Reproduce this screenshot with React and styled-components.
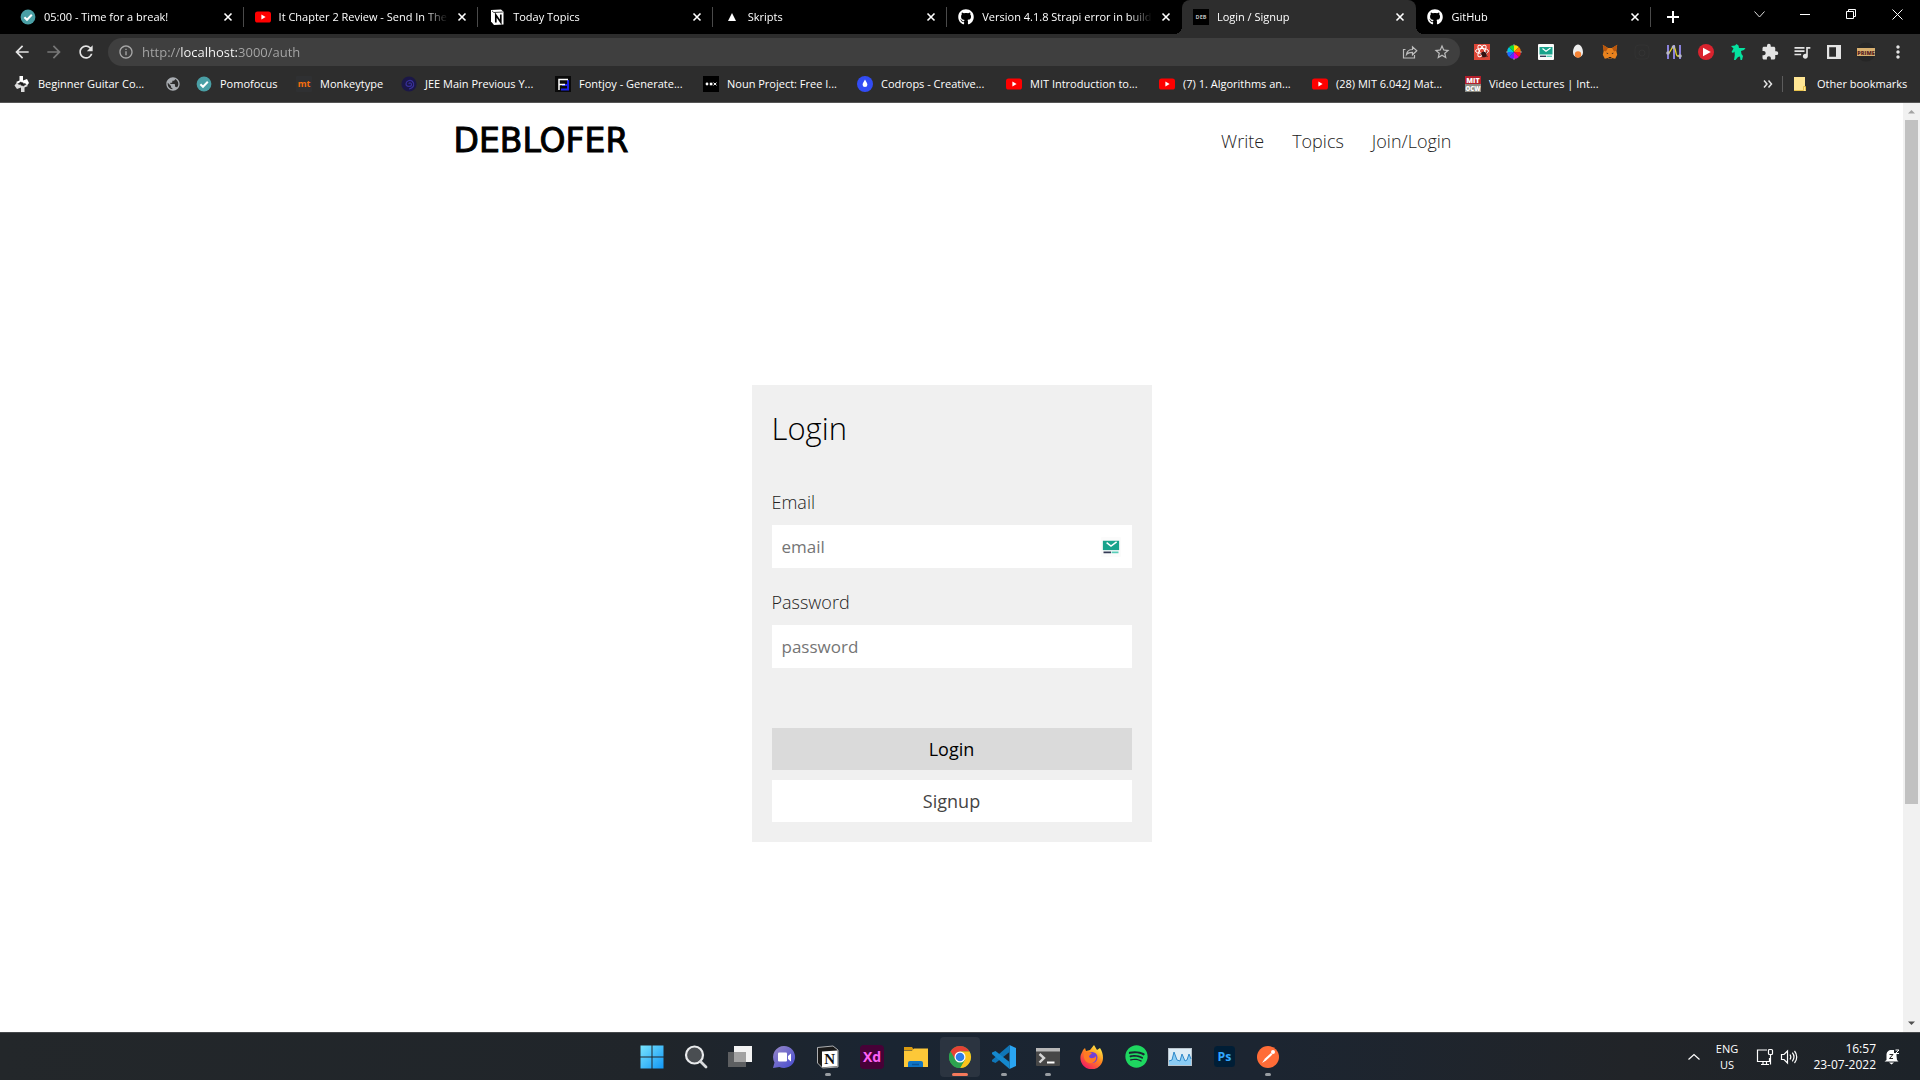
import React from "react";
import styled, { createGlobalStyle, css } from "styled-components";
import {
  MdArrowBack, MdArrowForward, MdRefresh, MdInfoOutline, MdStarOutline,
  MdExtension, MdQueueMusic, MdMoreVert, MdPublic,
} from "react-icons/md";
import { FaGithub, FaSpotify } from "react-icons/fa";

const uiFont = '"Open Sans", "Noto Sans", sans-serif';

const GlobalStyle = createGlobalStyle`
  *, *::before, *::after { box-sizing: border-box; }
  html, body, #root { height: 100%; }
  body { margin: 0; font-family: ${uiFont}; background: #fff; overflow: hidden; }
  button, input { font: inherit; border: 0; border-radius: 0; padding: 0; margin: 0; }
  button { background: none; color: inherit; cursor: pointer; }
  a { color: inherit; text-decoration: none; }
  svg { display: block; flex: none; }
`;

const Screen = styled.div`
  display: flex;
  flex-direction: column;
  height: 100vh;
`;

/* ---------- browser chrome ---------- */

const TabStrip = styled.div`
  display: flex;
  align-items: stretch;
  height: 34px;
  padding-left: 9px;
  background: #000;
  color: #fff;
`;

const Tabs = styled.div`
  display: flex;
  flex: 1;
  min-width: 0;
`;

const dividerLine = css`
  &::after {
    content: "";
    position: absolute;
    right: 0;
    top: 7px;
    width: 1px;
    height: 20px;
    background: #4a4a4a;
  }
`;

const activeFlares = css`
  background: #2d2d2d;

  &::before, &::after {
    content: "";
    position: absolute;
    bottom: 0;
    width: 8px;
    height: 8px;
  }
  &::before {
    right: 100%;
    background: radial-gradient(circle at 0 0, transparent 8px, #2d2d2d 8px);
  }
  &::after {
    left: 100%;
    background: radial-gradient(circle at 100% 0, transparent 8px, #2d2d2d 8px);
  }
`;

const Tab = styled.div`
  position: relative;
  display: flex;
  flex: 1 1 0;
  min-width: 0;
  align-items: center;
  gap: 8px;
  padding: 0 10px 0 11px;
  font-size: 11px;
  line-height: 16px;
  border-radius: 8px 8px 0 0;
  ${(p) => p.$divider && dividerLine}
  ${(p) => p.$active && activeFlares}
`;

const TabTitle = styled.span`
  flex: 1;
  min-width: 0;
  overflow: hidden;
  white-space: nowrap;
  mask-image: linear-gradient(to right, #000 calc(100% - 24px), transparent);
`;

const TabClose = styled.button`
  display: grid;
  place-items: center;
  width: 12px;
  height: 12px;
`;

const NewTab = styled.button`
  display: grid;
  place-items: center;
  width: 44px;
`;

const WindowControls = styled.div`
  display: flex;
  margin-left: 41px;
  height: 28px;
`;

const WindowButton = styled.button`
  display: grid;
  place-items: center;
  width: 46px;
`;

const Toolbar = styled.div`
  display: flex;
  align-items: center;
  height: 36px;
  padding: 0 6px;
  background: #2d2d2d;
`;

const ToolButton = styled.button`
  display: grid;
  place-items: center;
  width: 32px;
  height: 28px;
  color: ${(p) => (p.$dim ? "#777" : "#e4e4e4")};
`;

const AddressBar = styled.div`
  display: flex;
  flex: 1;
  align-items: center;
  height: 28px;
  margin: 0 6px;
  padding: 0 2px;
  border-radius: 14px;
  background: #3f3f3f;
  color: #bdbdbd;
`;

const AddressInput = styled.input`
  flex: 1;
  min-width: 0;
  height: 28px;
  font-size: 13px;
  outline: none;
  color: transparent;
  background: linear-gradient(to right, #a8a8a8 39px, #fff 39px, #fff 95px, #a8a8a8 95px);
  background-clip: text;
`;

const Bookmarks = styled.nav`
  display: flex;
  align-items: center;
  height: 33px;
  padding: 0 10px 4px 14px;
  background: #2d2d2d;
  border-bottom: 1px solid #555;
  color: #fff;
  font-size: 11px;
  line-height: 16px;
`;

const Bookmark = styled.a`
  display: flex;
  align-items: center;
  gap: 8px;
  flex: none;
  width: ${(p) => p.$w}px;
  white-space: nowrap;
`;

const Overflow = styled.button`
  display: grid;
  place-items: center;
  margin-left: auto;
  width: 28px;
  height: 16px;
`;

const BookmarkDivider = styled.span`
  width: 1px;
  height: 16px;
  margin-right: 10px;
  background: #5c5c5c;
`;

/* ---------- web page ---------- */

const Viewport = styled.div`
  display: flex;
  flex: 1;
  min-height: 0;
  background: #fff;
`;

const Page = styled.div`
  display: flex;
  flex: 1;
  flex-direction: column;
  min-width: 0;
`;

const Header = styled.header`
  display: flex;
  align-items: center;
  justify-content: space-between;
  width: 100%;
  max-width: 1000px;
  height: 76px;
  margin: 0 auto;
  padding-left: 2px;
`;

const Logo = styled.a`
  font-family: "DejaVu Sans", sans-serif;
  font-size: 33px;
  line-height: 40px;
  color: #000;
  -webkit-text-stroke: 1px #000;
`;

const Nav = styled.nav`
  display: flex;
  gap: 28px;
  font-size: 18px;
  font-weight: 300;
  line-height: 24px;
  color: #222;
`;

const Main = styled.main`
  display: grid;
  place-items: center;
  flex: 1;
  padding-top: 16px;
`;

const Card = styled.form`
  display: flex;
  flex-direction: column;
  width: 400px;
  padding: 20px;
  background: #f0f0f0;
`;

const Title = styled.h1`
  margin: 0 0 37px;
  font-size: 31px;
  font-weight: 300;
  line-height: 46px;
  color: #000;
`;

const Field = styled.div`
  display: flex;
  flex-direction: column;
  gap: 8px;
  margin-bottom: 20px;
`;

const Label = styled.label`
  font-size: 18px;
  font-weight: 300;
  line-height: 29px;
  color: #222;
`;

const InputBox = styled.div`
  display: flex;
  align-items: center;
  height: 43px;
  padding: 0 11px 0 10px;
  background: #fff;
`;

const Input = styled.input`
  flex: 1;
  min-width: 0;
  height: 43px;
  background: transparent;
  font-size: 17px;
  outline: none;
  color: #222;
  &::placeholder { color: #757575; }
`;

const Actions = styled.div`
  display: grid;
  gap: 10px;
  margin-top: 40px;
`;

const ActionButton = styled.button`
  height: 42px;
  font-size: 18px;
  background: ${(p) => (p.$primary ? "#dadada" : "#fff")};
  color: ${(p) => (p.$primary ? "#000" : "#444")};
`;

const Scrollbar = styled.div`
  display: flex;
  flex-direction: column;
  align-items: center;
  width: 17px;
  background: #f1f1f1;
`;

const ScrollArrow = styled.button`
  display: grid;
  place-items: center;
  width: 17px;
  height: 17px;
`;

const ScrollTrack = styled.div`
  display: grid;
  grid-template-rows: 13fr 4fr;
  flex: 1;
  width: 13px;
`;

const ScrollThumb = styled.div`
  background: #c1c1c1;
`;

/* ---------- taskbar ---------- */

const Taskbar = styled.footer`
  display: grid;
  grid-template-columns: 1fr auto 1fr;
  height: 48px;
  border-top: 1px solid #45484b;
  background: linear-gradient(to right, #23272a 0%, #20252a 34%, #1a2532 46%, #1c2531 66%, #212428 85%, #1d2329 100%);
  color: #fff;
`;

const Apps = styled.div`
  grid-column: 2;
  display: flex;
  align-items: center;
  gap: 4px;
`;

const TaskButton = styled.button`
  position: relative;
  display: grid;
  place-items: center;
  width: 40px;
  height: 40px;
  border-radius: 4px;
  background: ${(p) => (p.$active ? "#2b3440" : "transparent")};

  &::after {
    content: "";
    position: absolute;
    bottom: 1px;
    left: 50%;
    transform: translateX(-50%);
    width: ${(p) => (p.$active ? 16 : 6)}px;
    height: 3px;
    border-radius: 2px;
    background: ${(p) => (p.$active ? "#f4795b" : p.$open ? "#989da2" : "transparent")};
  }
`;

const Tray = styled.div`
  display: flex;
  align-items: center;
  justify-content: flex-end;
  padding-right: 14px;
  font-size: 12px;
  line-height: 16px;
`;

const TrayToggle = styled.button`
  display: grid;
  place-items: center;
  width: 24px;
  height: 40px;
`;

const TrayText = styled.div`
  width: ${(p) => p.$w}px;
  font-size: ${(p) => (p.$small ? 11 : 12)}px;
  text-align: ${(p) => p.$align};
  white-space: nowrap;
`;

const TrayIcons = styled.div`
  display: flex;
  gap: 6px;
  margin: 0 6px 0 8px;
`;

/* ---------- small icons ---------- */

const Svg = ({ size = 16, box = 16, children, ...rest }) => (
  <svg width={size} height={size} viewBox={`0 0 ${box} ${box}`} fill="none" aria-hidden="true" {...rest}>
    {children}
  </svg>
);

const CheckBadge = () => (
  <Svg>
    <circle cx="8" cy="8" r="7.4" fill="#4a9fa5" />
    <path d="M4.4 8.2l2.6 2.6 4.8-5" stroke="#fff" strokeWidth="2" />
  </Svg>
);
const YouTube = () => (
  <Svg>
    <rect x="0" y="2.5" width="16" height="11" rx="2.6" fill="#f00" />
    <path d="M6.4 5.6v4.8L10.6 8z" fill="#fff" />
  </Svg>
);
const NotionMark = () => (
  <Svg>
    <path d="M2 1L12 .5l2.500 2.200v12.800l-9.500.5L2 12.500z" fill="#fff" />
    <path d="M3 1.800l1.800 1.700 9-.5" stroke="#111" strokeWidth=".8" />
    <path d="M6.800 13.500V6l5 7.200V5.600" stroke="#000" strokeWidth="1.700" />
  </Svg>
);
const Triangle = () => (
  <Svg><path d="M8 4l4 8H4z" fill="#fff" /></Svg>
);
const DebIcon = () => (
  <Svg>
    <rect width="16" height="16" fill="#000" />
    <text x="8" y="10" fontSize="5.5" fontWeight="700" textAnchor="middle" fill="#bbb">DEB</text>
  </Svg>
);
const Pinwheel = () => (
  <Svg>
    <path d="M5.500 0H9v4.500L13 3l2 4-2 2.500L11 7 8.500 8.500 7 5.500 4 7.500 2 6l3.500-1.500z" fill="#fff" />
    <path d="M10.500 16H7v-4.500L3 13 .5 9.500 3 6.500 5 9l2.500-1.500L9 10.500 12 8.500l2 1.500-3.500 1.500z" fill="#dcdcdc" />
    <circle cx="8" cy="8" r="1.800" fill="#1a1a1a" />
  </Svg>
);
const Tile = ({ bg, fg, text, size = 8, y = 11 }) => (
  <Svg>
    <rect width="16" height="16" rx="1" fill={bg} />
    <text x="8" y={y} fontSize={size} fontWeight="700" textAnchor="middle" fill={fg}>{text}</text>
  </Svg>
);
const Swirl = () => (
  <Svg>
    <circle cx="8" cy="8" r="7.6" fill="#1b1748" />
    <path d="M8 8c0-2 3-1 2.500 1S5 11 5 8s4-5 6.500-2.500S13 12 8 13" stroke="#38309a" strokeWidth="1.200" />
  </Svg>
);
const FontjoyIcon = () => (
  <Svg>
    <rect width="16" height="16" fill="#0a0a0a" />
    <path d="M6 13.500h8M7 9h7M13 4v9" stroke="#1a22e8" strokeWidth="2" />
    <path d="M4 14V3.500h9M4 8.500h6" stroke="#fff" strokeWidth="1.500" />
  </Svg>
);
const NounIcon = () => (
  <Svg>
    <rect width="16" height="16" fill="#000" />
    <circle cx="4" cy="8" r="1.400" fill="#fff" />
    <rect x="6.800" y="6.700" width="2.600" height="2.600" fill="#fff" />
    <path d="M10.500 6.700l3 2.600M13.500 6.700l-3 2.600" stroke="#fff" />
  </Svg>
);
const CodropsIcon = () => (
  <Svg>
    <circle cx="8" cy="8" r="8" fill="#324cf5" />
    <path d="M8 3.500c1 2 2.400 3.400 2.400 5.200a2.400 2.400 0 01-4.800 0C5.600 6.900 7 5.500 8 3.500z" fill="#fff" />
  </Svg>
);
const MitIcon = () => (
  <Svg>
    <rect width="16" height="8" fill="#b3202c" />
    <rect y="8" width="16" height="8" fill="#8c8b82" />
    <text x="8" y="7" fontSize="7" fontWeight="800" textAnchor="middle" fill="#fff">MIT</text>
    <text x="8" y="15" fontSize="6" fontWeight="800" textAnchor="middle" fill="#fff">OCW</text>
  </Svg>
);
const FolderNote = () => (
  <Svg>
    <path d="M1 1h11v10h1v4H1z" fill="#ffe694" />
    <path d="M1 14.500h9.500V10.500h2v4" stroke="#e8c24b" />
  </Svg>
);

const ReactBug = () => (
  <Svg>
    <rect width="16" height="16" fill="#dd4637" />
    <g stroke="#fff" strokeWidth="1">
      <ellipse cx="8" cy="7" rx="6.500" ry="2.500" />
      <ellipse cx="8" cy="7" rx="6.500" ry="2.500" transform="rotate(60 8 7)" />
      <ellipse cx="8" cy="7" rx="6.500" ry="2.500" transform="rotate(120 8 7)" />
    </g>
    <ellipse cx="10" cy="10.500" rx="2.400" ry="3" fill="#311" transform="rotate(-35 10 10.500)" />
    <path d="M6.500 9.500l7 3M8 13.500l5-6" stroke="#311" />
  </Svg>
);
const wheelColors = ["#ffd800", "#ff7a00", "#ff1b1b", "#e600c8", "#5b2bff", "#1b6dff", "#00c8e0", "#12d63a"];
const ColorWheel = () => (
  <Svg>
    {wheelColors.map((c, i) => (
      <path key={c} d="M8 8L8 1A7 7 0 0112.950 3.050z" fill={c} transform={`rotate(${i * 45} 8 8)`} />
    ))}
    <path d="M8 0v2M8 14v2M0 8h2M14 8h2" stroke="#999" />
  </Svg>
);
const TempMail = ({ size = 16 }) => (
  <Svg size={size}>
    <rect width="16" height="16" rx="1" fill="#fbfbfb" />
    <rect x="1.500" y="3" width="13" height="7.500" fill="#18a38c" />
    <path d="M4.500 4.500l3.500 2.800 4.500-3.400" stroke="#fff" strokeWidth="1.200" />
    <path d="M2 12.300h6" stroke="#333a55" strokeWidth="1.400" />
    <path d="M8.500 12.300H14" stroke="#58cdb8" strokeWidth="1.400" />
  </Svg>
);
const Egg = () => (
  <Svg>
    <path d="M8 .5c3 0 5 4 5 8a5 5 0 01-10 0c0-4 2-8 5-8z" fill="#ededed" />
    <circle cx="8" cy="10.500" r="3.200" fill="#f48233" />
  </Svg>
);
const Fox = () => (
  <Svg>
    <path d="M.8.800L6 4h4L15.200.800l-.9 6 .9 4-2 4-3.200-.8-1 1H7l-1-1-3.200.800-2-4 .9-4z" fill="#e8821e" />
    <path d="M.8.800L6 4 4 7.500l-2.300-.7zM15.200.800L10 4l2 3.500 2.300-.7z" fill="#b8560e" />
    <path d="M4.500 8.500l2 1-1.500.6zM11.500 8.500l-2 1 1.500.6zM6.500 13h3l-.5 1.400H7z" fill="#2b2320" />
  </Svg>
);
const GhostExt = () => (
  <Svg><rect x="1" y="1" width="14" height="14" rx="4" stroke="#323232" /><circle cx="8" cy="9" r="3" stroke="#343434" /></Svg>
);
const Sliders = () => (
  <Svg>
    <path d="M2 1v14M8 1v14M14 1v14" stroke="#8a82dc" strokeWidth="2" />
    <path d="M2 9C5 9 5 3 7.500 3s2 9 4 9h3" stroke="#e3d42a" strokeWidth="1.300" />
    <circle cx="2" cy="9" r="1.800" fill="#b8b8c8" /><circle cx="7.500" cy="3" r="1.800" fill="#b8b8c8" /><circle cx="14" cy="12" r="1.800" fill="#b8b8c8" />
  </Svg>
);
const RedPlay = () => (
  <Svg><circle cx="8" cy="8" r="8" fill="#d9232e" /><path d="M5 3.800v8.400L12.800 8z" fill="#fff" /></Svg>
);
const Gremlin = () => (
  <Svg>
    <path d="M1 2l4-.5L6.500 0l2 1.500L9 4h6.500L14 6l-3 1 .5 3 1.500 2-1 4h-1.500L10 12.500l-2 .5-2.500 3H4l.8-5L4.500 7.500 3 9 1.500 8l2-3.500z" fill="#05e2a0" />
  </Svg>
);
const SidePanel = () => (
  <Svg><path fillRule="evenodd" d="M1 1h14v14H1zM3.200 3.200v9.600H10V3.200z" fill="#e4e4e4" /></Svg>
);
const Prime = () => (
  <Svg size={20} box={20}>
    <circle cx="10" cy="10" r="9.500" fill="#262626" />
    <rect x="1" y="6" width="18" height="8" fill="#d8b070" />
    <text x="10" y="12.500" fontSize="5.500" fontWeight="800" textAnchor="middle" fill="#5a2422">PRIME</text>
  </Svg>
);
const Share = () => (
  <Svg stroke="#bdbdbd" strokeWidth="1.200">
    <path d="M3.500 5.500H1.500v8.500h11v-3" />
    <path d="M4.500 10.500c.5-3.500 2.500-5 6-5V2.800l4.300 4-4.300 4V8.300c-3 0-4.700.5-6 2.200z" />
  </Svg>
);
const CloseMark = () => (
  <Svg size={10} box={10}><path d="M1.500 1.500l7 7M8.500 1.500l-7 7" stroke="#fff" strokeWidth="1.600" /></Svg>
);
const PlusMark = () => (
  <Svg size={12} box={12}><path d="M6 0v12M0 6h12" stroke="#fff" strokeWidth="2" /></Svg>
);

/* ---------- taskbar icons ---------- */

const Windows = () => (
  <Svg size={24} box={24}>
    <defs><linearGradient id="win" x1="0" y1="0" x2="24" y2="24" gradientUnits="userSpaceOnUse"><stop stopColor="#7be6fd" /><stop offset="1" stopColor="#0f95f5" /></linearGradient></defs>
    <path d="M.5.5h11v11H.5zM12.500.5h11v11h-11zM.5 12.500h11v11H.5zM12.500 12.500h11v11h-11z" fill="url(#win)" />
  </Svg>
);
const Search = () => (
  <Svg size={24} box={24}>
    <circle cx="10.500" cy="10" r="8.500" fill="#4a4e52" stroke="#e8eaec" strokeWidth="2.200" />
    <path d="M16.500 16.500l5.500 5.500" stroke="#d8dadc" strokeWidth="2.800" strokeLinecap="round" />
  </Svg>
);
const TaskView = () => (
  <Svg size={24} box={24}>
    <rect x="6" y="1" width="18" height="16" fill="#f3f3f3" />
    <rect x="0" y="7" width="18" height="15" fill="#5d5f61" />
    <rect x="6" y="7" width="12" height="10" fill="#a2a2a2" />
  </Svg>
);
const Chat = () => (
  <Svg size={24} box={24}>
    <defs><linearGradient id="chat" x1="3" y1="3" x2="20" y2="22" gradientUnits="userSpaceOnUse"><stop stopColor="#9183c8" /><stop offset="1" stopColor="#4c50cf" /></linearGradient></defs>
    <path d="M12 1a11 11 0 11-4.500 21L1 23l1.500-5.500A11 11 0 0112 1z" fill="url(#chat)" />
    <rect x="6" y="7.500" width="9" height="9" rx="1" fill="#fff" />
    <path d="M16 11l3-2.500v8L16 14z" fill="#fff" />
  </Svg>
);
const NotionApp = () => (
  <Svg size={24} box={24}>
    <path d="M1.500 2.500L17 1l5 4v17l-15.500 1L1.500 18z" fill="#1a1a1a" stroke="#eee" strokeWidth=".7" />
    <path d="M6 6.500l15.500-1v15.800L6 22.300z" fill="#fff" />
    <text x="13.700" y="19" fontSize="15" fontWeight="700" fontFamily="Liberation Serif" textAnchor="middle" fill="#111">N</text>
  </Svg>
);
const AdobeTile = ({ bg, fg, text, size }) => (
  <Svg size={size} box={24}>
    <rect width="24" height="24" rx="4" fill={bg} />
    <text x="12" y="17" fontSize="14" fontWeight="700" textAnchor="middle" fill={fg}>{text}</text>
  </Svg>
);
const Explorer = () => (
  <Svg size={24} box={24}>
    <path d="M0 2h8l2 3H0z" fill="#d99a10" />
    <path d="M0 5.500h8L10 3.500h14V22H0z" fill="#fdc838" />
    <path d="M4 22v-4a2 2 0 012-2h11a2 2 0 012 2v4z" fill="#0f74c4" />
    <path d="M8 19.500h7" stroke="#0a559a" strokeWidth="1.500" />
  </Svg>
);
const Chrome = () => (
  <Svg size={24} box={24}>
    <circle cx="12" cy="12" r="11" fill="#2da34f" />
    <path d="M12 12L2.470 6.500A11 11 0 0121.530 6.500H12z" fill="#e64234" />
    <path d="M12 6.500h9.530A11 11 0 0112 23l4.800-8.200z" fill="#fcc31c" />
    <path d="M2.470 6.500L7.300 14.800 12 12V6.500z" fill="#e64234" />
    <path d="M2.470 6.500A11 11 0 0012 23l4.800-8.200L12 17.500l-4.800-2.800z" fill="#2da34f" />
    <circle cx="12" cy="12" r="5.500" fill="#fff" />
    <circle cx="12" cy="12" r="4.300" fill="#2f7de9" />
  </Svg>
);
const VSCode = () => (
  <Svg size={24} box={24}>
    <path d="M17.500 0L24 3v18l-6.500 3z" fill="#2aa5f2" />
    <path d="M17.500 0v7L3.500 18 0 16.500v-1.500z" fill="#0f76b8" />
    <path d="M17.500 24v-7L3.500 6 0 7.500V9z" fill="#1588cd" />
  </Svg>
);
const Terminal = () => (
  <Svg size={24} box={24}>
    <rect y="3" width="24" height="18" rx="1" fill="#474747" />
    <path d="M0 3h24v3.500H0z" fill="#b7b7b7" />
    <path d="M3.500 9l4.500 4-4.500 4.500" stroke="#d6d6d6" strokeWidth="2.400" />
    <path d="M11 17.500h7.500" stroke="#fff" strokeWidth="2" />
  </Svg>
);
const Firefox = () => (
  <Svg size={24} box={24}>
    <defs><linearGradient id="fox" x1="20" y1="2" x2="5" y2="22" gradientUnits="userSpaceOnUse"><stop stopColor="#fff04a" /><stop offset=".45" stopColor="#ff8a1c" /><stop offset="1" stopColor="#f5205e" /></linearGradient></defs>
    <path d="M3 5l2-2 1 3 4-1 4-5 3 5 3-2c2 3 3 6 3 10a11.300 11.300 0 01-22.600 0C.4 9 2 8 3 5z" fill="url(#fox)" />
    <circle cx="12" cy="12.500" r="5.500" fill="#7140d8" />
    <path d="M4 8c3-2 5 0 8 0l-3 3c0 3 5 3 7 0 1 5-3 8-7 7-4-1-6-5-5-10z" fill="#ff7a24" />
  </Svg>
);
const PerfMon = () => (
  <Svg size={24} box={24}>
    <rect x=".5" y="3.500" width="23" height="17" fill="#dcecf6" stroke="#b9c4cc" />
    <path d="M1 16l3-1 2-8 3 8 3 1 2-7 3 7 2-1 2-6 2 5v6H1z" fill="#8bccf4" />
    <path d="M1 16l3-1 2-8 3 8 3 1 2-7 3 7 2-1 2-6 2 5" stroke="#2f89c9" />
  </Svg>
);
const Postman = () => (
  <Svg size={24} box={24}>
    <circle cx="12" cy="12" r="11" fill="#ff6c37" />
    <path d="M6 18l3-4.500L15 8l1.500 1.500-6.500 6z" fill="#fff" />
    <circle cx="17" cy="7" r="2" fill="#fff" />
  </Svg>
);
const Network = () => (
  <Svg size={18} box={18} stroke="#fff" strokeWidth="1.200">
    <path d="M11 2H1.500v11.500h12V10M5 16.500h8M7 13.500v3M10.500 13.500v3" />
    <rect x="12.500" y="1.500" width="4" height="5" rx="1" />
    <path d="M14.500 6.500v10" />
  </Svg>
);
const Speaker = () => (
  <Svg size={18} box={18} stroke="#fff" strokeWidth="1.200">
    <path d="M1.500 6.500H4L7.500 3v12L4 11.500H1.500zM10 6.500c1 1.500 1 3.500 0 5M12.300 4.700c2 2.500 2 6 0 8.600M14.500 3c3 3.500 3 8.500 0 12" />
  </Svg>
);
const Bell = () => (
  <Svg size={16}>
    <path d="M2.500 6c0-3 2-5 5-5H10v3h2.500v3l.5 4 1.500 1.500H.5L2.500 11z" fill="#fff" />
    <path d="M5 13.500h5l-2.500 2z" fill="#fff" />
    <path d="M5.500 5.500h3.500l-3.500 4h3.500" stroke="#222" />
    <path d="M11.500 1h3.500l-3.500 3.500h3.500" stroke="#fff" />
  </Svg>
);

/* ---------- content ---------- */

const tabs = [
  { title: "05:00 - Time for a break!", icon: <CheckBadge />, divider: true },
  { title: "It Chapter 2 Review - Send In The", icon: <YouTube />, divider: true },
  { title: "Today Topics", icon: <NotionMark />, divider: true },
  { title: "Skripts", icon: <Triangle />, divider: true },
  { title: "Version 4.1.8 Strapi error in build", icon: <FaGithub size={16} /> },
  { title: "Login / Signup", icon: <DebIcon />, active: true },
  { title: "GitHub", icon: <FaGithub size={16} />, divider: true },
];

const bookmarks = [
  { text: "Beginner Guitar Co...", w: 151, icon: <Pinwheel /> },
  { text: "", w: 31, icon: <MdPublic size={16} color="#a9adb2" />, label: "Website" },
  { text: "Pomofocus", w: 100, icon: <CheckBadge /> },
  { text: "Monkeytype", w: 105, icon: <Tile bg="#2f3032" fg="#f66e0d" text="mt" size={9} /> },
  { text: "JEE Main Previous Y...", w: 154, icon: <Swirl /> },
  { text: "Fontjoy - Generate...", w: 148, icon: <FontjoyIcon /> },
  { text: "Noun Project: Free I...", w: 154, icon: <NounIcon /> },
  { text: "Codrops - Creative...", w: 149, icon: <CodropsIcon /> },
  { text: "MIT Introduction to...", w: 153, icon: <YouTube /> },
  { text: "(7) 1. Algorithms an...", w: 153, icon: <YouTube /> },
  { text: "(28) MIT 6.042J Mat...", w: 153, icon: <YouTube /> },
  { text: "Video Lectures | Int...", w: 136, icon: <MitIcon /> },
];

const extensions = [
  ["React tools", <ReactBug />], ["Color picker", <ColorWheel />], ["Temp mail", <TempMail />],
  ["Egg timer", <Egg />], ["Wallet", <Fox />], ["Disabled extension", <GhostExt />],
  ["Equalizer", <Sliders />], ["Player", <RedPlay />], ["Gremlin", <Gremlin />],
  ["Extensions", <MdExtension size={18} />], ["Media", <MdQueueMusic size={20} />],
  ["Side panel", <SidePanel />], ["Profile", <Prime />], ["Menu", <MdMoreVert size={20} />],
];

const apps = [
  { name: "Start", icon: <Windows /> },
  { name: "Search", icon: <Search /> },
  { name: "Task view", icon: <TaskView /> },
  { name: "Chat", icon: <Chat /> },
  { name: "Notion", icon: <NotionApp />, open: true },
  { name: "Adobe XD", icon: <AdobeTile bg="#470137" fg="#ff61f6" text="Xd" size={24} /> },
  { name: "File Explorer", icon: <Explorer /> },
  { name: "Chrome", icon: <Chrome />, active: true },
  { name: "VS Code", icon: <VSCode />, open: true },
  { name: "Terminal", icon: <Terminal />, open: true },
  { name: "Firefox", icon: <Firefox /> },
  { name: "Spotify", icon: <FaSpotify size={23} color="#1ed760" /> },
  { name: "Performance Monitor", icon: <PerfMon /> },
  { name: "Photoshop", icon: <AdobeTile bg="#001e36" fg="#31a8ff" text="Ps" size={21} /> },
  { name: "Postman", icon: <Postman />, open: true },
];

function BrowserChrome() {
  return (
    <header>
      <TabStrip>
        <Tabs>
          {tabs.map((t) => (
            <Tab key={t.title} $active={t.active} $divider={t.divider}>
              {t.icon}
              <TabTitle>{t.title}</TabTitle>
              <TabClose aria-label="Close tab"><CloseMark /></TabClose>
            </Tab>
          ))}
        </Tabs>
        <NewTab aria-label="New tab"><PlusMark /></NewTab>
        <WindowControls>
          <WindowButton aria-label="Search tabs"><Svg size={11} box={11}><path d="M.5 2.500l5 5.500 5-5.500" stroke="#ddd" /></Svg></WindowButton>
          <WindowButton aria-label="Minimize"><Svg size={10} box={10}><path d="M0 5.500h10" stroke="#fff" /></Svg></WindowButton>
          <WindowButton aria-label="Restore"><Svg size={10} box={10}><path d="M.5 2.500h7v7h-7zM2.500 2.500v-2h7v7h-2" stroke="#fff" /></Svg></WindowButton>
          <WindowButton aria-label="Close"><Svg size={11} box={11}><path d="M.5.5l10 10M10.500.5l-10 10" stroke="#fff" /></Svg></WindowButton>
        </WindowControls>
      </TabStrip>
      <Toolbar>
        <ToolButton aria-label="Back"><MdArrowBack size={20} /></ToolButton>
        <ToolButton aria-label="Forward" $dim><MdArrowForward size={20} /></ToolButton>
        <ToolButton aria-label="Reload"><MdRefresh size={20} /></ToolButton>
        <AddressBar>
          <ToolButton aria-label="Site information"><MdInfoOutline size={16} color="#a8a8a8" /></ToolButton>
          <AddressInput aria-label="Address" defaultValue="http://localhost:3000/auth" />
          <ToolButton aria-label="Share"><Share /></ToolButton>
          <ToolButton aria-label="Bookmark this page"><MdStarOutline size={18} color="#bdbdbd" /></ToolButton>
        </AddressBar>
        {extensions.map(([name, icon]) => (
          <ToolButton key={name} aria-label={name}>{icon}</ToolButton>
        ))}
      </Toolbar>
      <Bookmarks aria-label="Bookmarks">
        {bookmarks.map((b, i) => (
          <Bookmark key={i} href="#" $w={b.w} aria-label={b.label}>{b.icon}{b.text}</Bookmark>
        ))}
        <Overflow aria-label="More bookmarks">
          <Svg size={10} box={10}><path d="M1 1.500L4 5 1 8.500M5.500 1.500l3 3.500-3 3.500" stroke="#e4e4e4" strokeWidth="1.500" /></Svg>
        </Overflow>
        <BookmarkDivider />
        <Bookmark href="#" $w={117}><FolderNote />Other bookmarks</Bookmark>
      </Bookmarks>
    </header>
  );
}

function LoginPage() {
  return (
    <Viewport>
      <Page>
        <Header>
          <Logo href="#">DEBLOFER</Logo>
          <Nav>
            <a href="#">Write</a>
            <a href="#">Topics</a>
            <a href="#">Join/Login</a>
          </Nav>
        </Header>
        <Main>
          <Card onSubmit={(e) => e.preventDefault()}>
            <Title>Login</Title>
            <Field>
              <Label htmlFor="email">Email</Label>
              <InputBox>
                <Input id="email" type="email" placeholder="email" />
                <TempMail size={20} />
              </InputBox>
            </Field>
            <Field>
              <Label htmlFor="password">Password</Label>
              <InputBox>
                <Input id="password" type="password" placeholder="password" />
              </InputBox>
            </Field>
            <Actions>
              <ActionButton type="submit" $primary>Login</ActionButton>
              <ActionButton type="button">Signup</ActionButton>
            </Actions>
          </Card>
        </Main>
      </Page>
      <Scrollbar>
        <ScrollArrow aria-label="Scroll up"><Svg size={7} box={7}><path d="M0 5.500L3.500 2 7 5.500z" fill="#a3a3a3" /></Svg></ScrollArrow>
        <ScrollTrack><ScrollThumb /></ScrollTrack>
        <ScrollArrow aria-label="Scroll down"><Svg size={7} box={7}><path d="M0 1.500L3.500 5 7 1.500z" fill="#505050" /></Svg></ScrollArrow>
      </Scrollbar>
    </Viewport>
  );
}

function WindowsTaskbar() {
  return (
    <Taskbar>
      <Apps>
        {apps.map((a) => (
          <TaskButton key={a.name} aria-label={a.name} $active={a.active} $open={a.open}>{a.icon}</TaskButton>
        ))}
      </Apps>
      <Tray>
        <TrayToggle aria-label="Show hidden icons">
          <Svg size={12} box={12}><path d="M.5 8.500L6 3.500l5.500 5" stroke="#fff" strokeWidth="1.200" /></Svg>
        </TrayToggle>
        <TrayText $w={42} $align="center" $small>ENG<br />US</TrayText>
        <TrayIcons><Network /><Speaker /></TrayIcons>
        <TrayText $w={72} $align="right">16:57<br />23-07-2022</TrayText>
        <TrayIcons><Bell /></TrayIcons>
      </Tray>
    </Taskbar>
  );
}

export default function App() {
  return (
    <Screen>
      <GlobalStyle />
      <BrowserChrome />
      <LoginPage />
      <WindowsTaskbar />
    </Screen>
  );
}
